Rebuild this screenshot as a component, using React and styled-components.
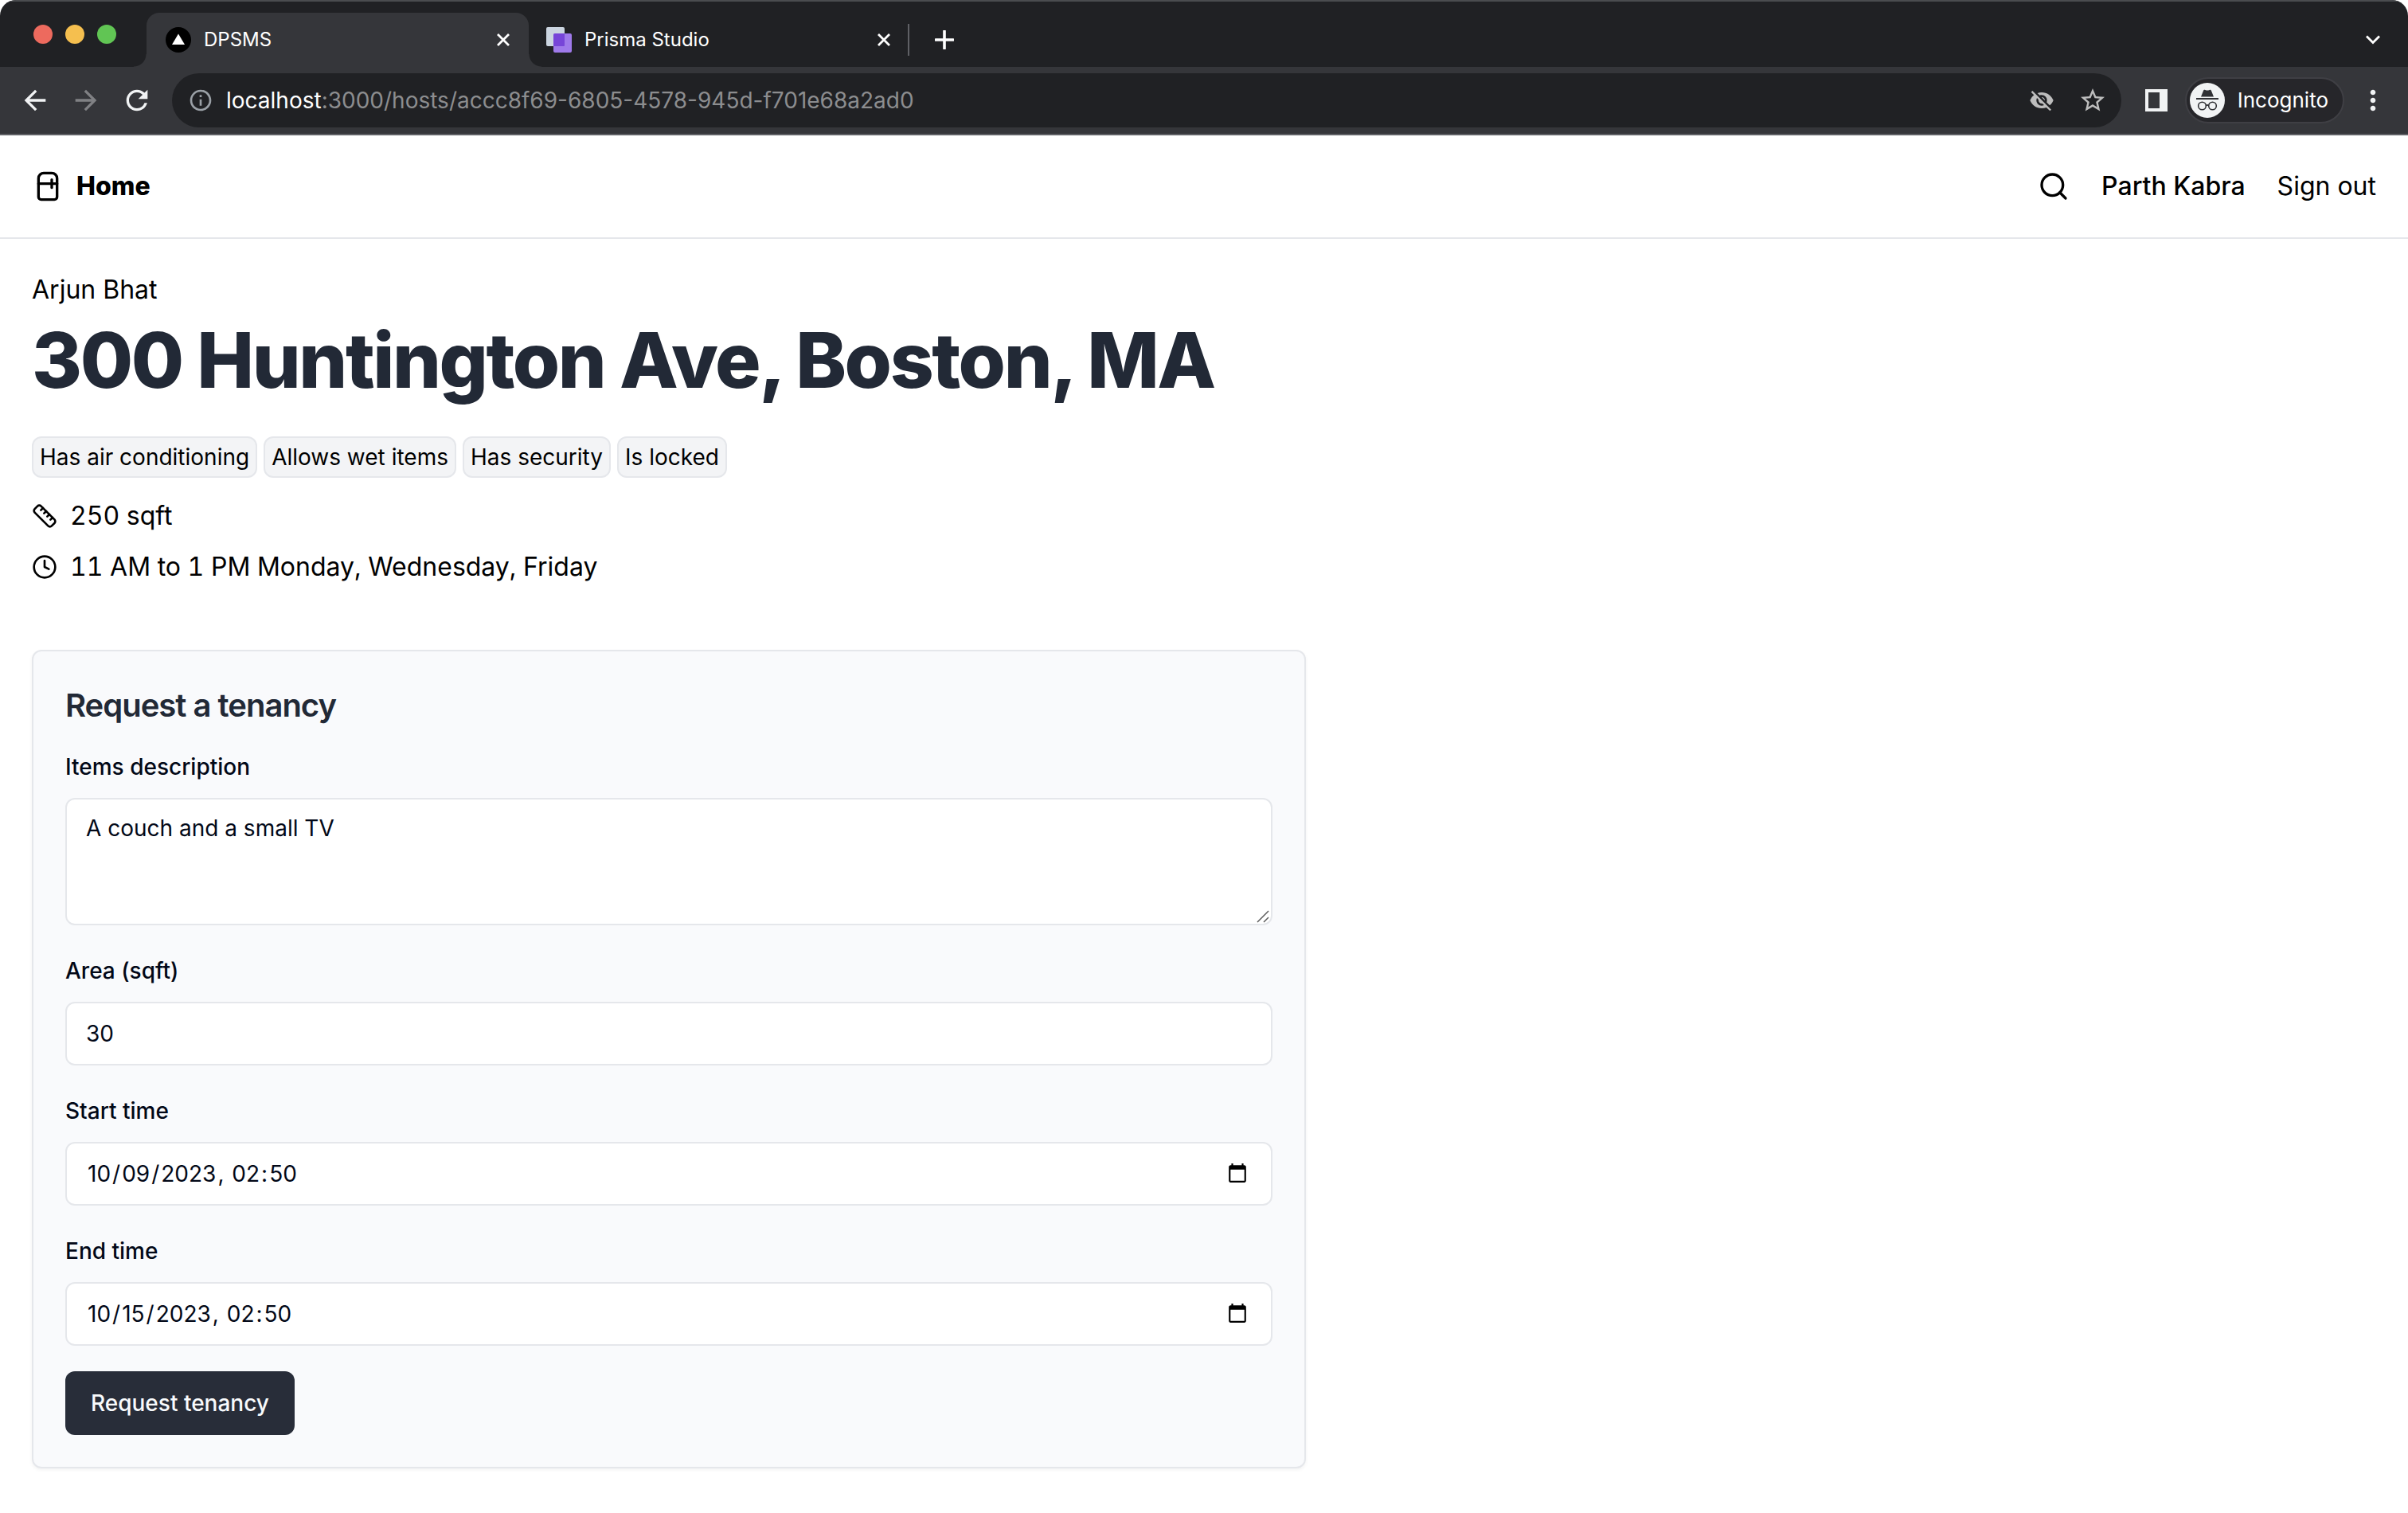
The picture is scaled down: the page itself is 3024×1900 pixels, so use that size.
import React, { useState } from "react";
import styled, { createGlobalStyle } from "styled-components";
import { Clock, Refrigerator, Ruler, Search } from "lucide-react";
import {
  MdArrowBack,
  MdArrowForward,
  MdInfoOutline,
  MdMoreVert,
  MdRefresh,
  MdStarBorder,
  MdVisibilityOff,
} from "react-icons/md";

const GlobalStyle = createGlobalStyle`
  *, *::before, *::after { box-sizing: border-box; }
  body {
    margin: 0;
    background: #ffffff;
    color: #000000;
    font-family: Inter, "Liberation Sans", sans-serif;
    font-size: 32px;
    line-height: 48px;
  }
  button, input, textarea { font: inherit; color: inherit; }
  h1, h2, p, ul { margin: 0; padding: 0; }
  h1, h2 { color: #222936; letter-spacing: -0.025em; }
  svg { display: block; flex: none; }
`;

/* ---------- Browser window ---------- */

const BrowserChrome = styled.div`
  border-radius: 20px 20px 0 0;
  overflow: hidden;
  background: #202124;
  border-bottom: 2px solid #5f6065;
  color: #ffffff;
`;

const TabStrip = styled.div`
  display: flex;
  align-items: stretch;
  height: 84px;
  padding: 14px 24px 0 42px;
  border-top: 2px solid #4a4c4f;
`;

const TrafficLights = styled.div`
  display: flex;
  gap: 16px;
  padding: 15px 38px 0 0;
`;

const Light = styled.button`
  width: 24px;
  height: 24px;
  padding: 0;
  border: 0;
  border-radius: 50%;
  background: ${(p) => p.$color};
`;

const Tab = styled.div`
  position: relative;
  display: flex;
  align-items: center;
  width: 480px;
  padding: 0 24px;
  gap: 16px;
  border-radius: 16px 16px 0 0;
  background: ${(p) => (p.$active ? "#35363a" : "transparent")};

  & + & {
    margin-left: -2px;
  }
  &::before,
  &::after {
    content: "";
    display: ${(p) => (p.$active ? "block" : "none")};
    position: absolute;
    bottom: 0;
    width: 16px;
    height: 16px;
  }
  &::before {
    right: 100%;
    background: radial-gradient(circle at 0 0, transparent 15px, #35363a 16px);
  }
  &::after {
    left: 100%;
    background: radial-gradient(circle at 100% 0, transparent 15px, #35363a 16px);
  }
`;

const TabTitle = styled.span`
  flex: 1;
  font-size: 24px;
  line-height: 32px;
`;

const IconButton = styled.button`
  display: flex;
  align-items: center;
  justify-content: center;
  align-self: center;
  width: ${(p) => p.$size || 40}px;
  height: ${(p) => p.$size || 40}px;
  padding: 0;
  border: 0;
  background: none;
  color: ${(p) => p.$color || "#f1f3f4"};
`;

const TabDivider = styled.div`
  align-self: center;
  width: 2px;
  height: 40px;
  margin: 0 24px 0 -2px;
  background: #5f6065;
`;

const StripSpacer = styled.div`
  flex: 1;
`;

const Toolbar = styled.div`
  display: flex;
  align-items: center;
  gap: 24px;
  height: 84px;
  padding: 0 24px;
  background: #35363a;
`;

const AddressBar = styled.div`
  flex: 1;
  display: flex;
  align-items: center;
  gap: 16px;
  height: 68px;
  padding: 0 16px 0 20px;
  border-radius: 34px;
  background: #202124;
`;

const Address = styled.div`
  flex: 1;
  font-size: 28px;
  line-height: 40px;
  color: #8c8d8f;
`;

const AddressHost = styled.span`
  color: #ffffff;
`;

const AddressActions = styled.div`
  display: flex;
  gap: 24px;
`;

const ToolbarEnd = styled.div`
  display: flex;
  align-items: center;
  gap: 16px;
`;

const Profile = styled.button`
  display: flex;
  align-items: center;
  gap: 16px;
  height: 58px;
  padding: 0 18px 0 4px;
  border: 2px solid #3f3f44;
  border-radius: 29px;
  background: #26262a;
  color: #ffffff;
  font-size: 26px;
  line-height: 32px;
`;

/* ---------- Site header ---------- */

const SiteHeader = styled.header`
  display: flex;
  align-items: center;
  justify-content: space-between;
  height: 130px;
  padding: 0 40px;
  border-bottom: 2px solid #e5e7eb;
`;

const SiteNav = styled.nav`
  display: flex;
  align-items: center;
  gap: 40px;
`;

const NavLink = styled.a`
  display: flex;
  align-items: center;
  gap: 16px;
  color: inherit;
  font-weight: ${(p) => p.$weight || 400};
  text-decoration: none;
`;

/* ---------- Listing ---------- */

const Main = styled.main`
  padding: 40px;
`;

const Title = styled.h1`
  margin-top: 16px;
  font-size: 96px;
  font-weight: 800;
  line-height: 96px;
`;

const Badges = styled.ul`
  display: flex;
  flex-wrap: wrap;
  gap: 8px;
  margin: 48px 0 24px;
  list-style: none;
`;

const Badge = styled.li`
  padding: 4px 8px;
  border: 2px solid #e5e7eb;
  border-radius: 12px;
  background: #f3f4f6;
  font-size: 28px;
  line-height: 40px;
`;

const Facts = styled.div`
  display: grid;
  gap: 16px;
  font-variant-numeric: tabular-nums;
`;

const Fact = styled.p`
  display: flex;
  align-items: center;
  gap: 16px;
`;

/* ---------- Tenancy form ---------- */

const Card = styled.form`
  display: flex;
  flex-direction: column;
  align-items: stretch;
  gap: 32px;
  width: 100%;
  max-width: 1600px;
  margin-top: 80px;
  padding: 40px;
  border: 2px solid #e5e7eb;
  border-radius: 12px;
  background: #f9fafc;
  box-shadow: 0 2px 4px rgba(0, 0, 0, 0.05);
  color: #020817;
`;

const CardTitle = styled.h2`
  margin-bottom: -8px;
  font-size: 40px;
  font-weight: 600;
  line-height: 56px;
`;

const Field = styled.div`
  display: grid;
  gap: 16px;
`;

const LabelLine = styled.div`
  height: 48px;
`;

const Label = styled.label`
  font-size: 28px;
  font-weight: 500;
  line-height: 28px;
`;

const Input = styled.input`
  width: 100%;
  height: 80px;
  padding: 16px 24px;
  border: 2px solid #e5e7eb;
  border-radius: 12px;
  outline: none;
  background: #ffffff;
  font-size: 28px;
  line-height: 40px;
  appearance: none;

  &::-webkit-inner-spin-button {
    display: none;
  }
  &::-webkit-datetime-edit-ampm-field {
    display: none;
  }
  &::-webkit-datetime-edit-month-field,
  &::-webkit-datetime-edit-day-field,
  &::-webkit-datetime-edit-year-field,
  &::-webkit-datetime-edit-hour-field,
  &::-webkit-datetime-edit-minute-field {
    padding: 0 2px;
  }
  &::-webkit-calendar-picker-indicator {
    margin-right: 2px;
  }
`;

const AreaWrap = styled.div`
  position: relative;
  display: grid;
`;

const TextArea = styled(Input)`
  height: 160px;
  resize: none;
`;

const ResizeGrip = styled.svg`
  position: absolute;
  right: 4px;
  bottom: 3px;
`;

const SubmitButton = styled.button`
  align-self: flex-start;
  height: 80px;
  padding: 0 32px;
  border: 0;
  border-radius: 12px;
  background: #282d39;
  color: #f8fafc;
  font-size: 28px;
  font-weight: 500;
  line-height: 40px;
`;

/* ---------- Drawings ---------- */

const VercelMark = () => (
  <svg width="32" height="32" viewBox="0 0 32 32" aria-hidden="true">
    <circle cx="16" cy="16" r="16" fill="#000" />
    <path d="M16 8.5l8 13.5H8z" fill="#fff" />
  </svg>
);

const PrismaMark = () => (
  <svg width="32" height="32" viewBox="0 0 32 32" aria-hidden="true">
    <rect width="23" height="24" rx="2" fill="#cbd5e0" />
    <rect x="9" y="8" width="23" height="24" rx="2" fill="#9f7aea" />
    <path d="M11 8h12v15a1 1 0 0 1-1 1H9V10a2 2 0 0 1 2-2z" fill="#7745d8" />
  </svg>
);

const CloseGlyph = () => (
  <svg width="16" height="16" viewBox="0 0 16 16" aria-hidden="true">
    <path d="M1 1l14 14M15 1L1 15" stroke="#fff" strokeWidth="2.8" />
  </svg>
);

const PlusGlyph = () => (
  <svg width="24" height="24" viewBox="0 0 24 24" aria-hidden="true">
    <path d="M12 1v22M1 12h22" stroke="#fff" strokeWidth="3.6" strokeLinecap="round" />
  </svg>
);

const ChevronGlyph = () => (
  <svg width="18" height="12" viewBox="0 0 18 12" aria-hidden="true">
    <path d="M1 1.5l8 8 8-8" fill="none" stroke="#fff" strokeWidth="2.8" />
  </svg>
);

const SidePanelGlyph = () => (
  <svg width="28" height="28" viewBox="0 0 28 28" aria-hidden="true">
    <path fillRule="evenodd" d="M0 0h28v28H0zM4 4v20h14V4z" fill="#f1f3f4" />
  </svg>
);

const IncognitoGlyph = () => (
  <svg width="44" height="44" viewBox="0 0 44 44" aria-hidden="true">
    <circle cx="22" cy="22" r="22" fill="#f1f3f4" />
    <path
      d="M14 17.5l3-7.500c.4-1.200 1.300-1.500 2.300-1.100l1.500.5c.8.2 1.600.2 2.400 0l1.500-.5c1-.4 1.900-.1 2.300 1.100l3 7.500z"
      fill="#303135"
    />
    <path d="M8 20h28" stroke="#303135" strokeWidth="2" />
    <g fill="none" stroke="#303135" strokeWidth="1.6">
      <circle cx="15.5" cy="29" r="4.8" />
      <circle cx="28.5" cy="29" r="4.8" />
      <path d="M20.3 28.6q1.7-1.4 3.4 0" />
    </g>
  </svg>
);

const badges = ["Has air conditioning", "Allows wet items", "Has security", "Is locked"];

const tabs = [
  { title: "DPSMS", mark: <VercelMark />, active: true },
  { title: "Prisma Studio", mark: <PrismaMark />, active: false },
];

function FormField({ id, label, children }) {
  return (
    <Field>
      <LabelLine>
        <Label htmlFor={id}>{label}</Label>
      </LabelLine>
      {children}
    </Field>
  );
}

function TenancyForm() {
  const [values, setValues] = useState({
    description: "A couch and a small TV",
    area: "30",
    start: "2023-10-09T02:50",
    end: "2023-10-15T02:50",
  });
  const bind = (name) => ({
    id: name,
    name,
    value: values[name],
    onChange: (e) => setValues({ ...values, [name]: e.target.value }),
  });

  return (
    <Card onSubmit={(e) => e.preventDefault()}>
      <CardTitle>Request a tenancy</CardTitle>
      <FormField id="description" label="Items description">
        <AreaWrap>
          <TextArea as="textarea" {...bind("description")} />
          <ResizeGrip width="16" height="16" viewBox="0 0 16 16" aria-hidden="true">
            <path d="M1 15L15 1M9 15l6-6" stroke="#5c5c5c" strokeWidth="1.5" />
          </ResizeGrip>
        </AreaWrap>
      </FormField>
      <FormField id="area" label="Area (sqft)">
        <Input type="number" {...bind("area")} />
      </FormField>
      <FormField id="start" label="Start time">
        <Input type="datetime-local" {...bind("start")} />
      </FormField>
      <FormField id="end" label="End time">
        <Input type="datetime-local" {...bind("end")} />
      </FormField>
      <SubmitButton type="submit">Request tenancy</SubmitButton>
    </Card>
  );
}

export default function App() {
  return (
    <>
      <GlobalStyle />
      <BrowserChrome>
        <TabStrip>
          <TrafficLights>
            <Light $color="#ed6a5e" aria-label="Close window" />
            <Light $color="#f5bf4f" aria-label="Minimise window" />
            <Light $color="#61c554" aria-label="Zoom window" />
          </TrafficLights>
          {tabs.map((tab) => (
            <Tab key={tab.title} $active={tab.active}>
              {tab.mark}
              <TabTitle>{tab.title}</TabTitle>
              <IconButton $size={16} aria-label={`Close ${tab.title}`}>
                <CloseGlyph />
              </IconButton>
            </Tab>
          ))}
          <TabDivider />
          <IconButton aria-label="New tab">
            <PlusGlyph />
          </IconButton>
          <StripSpacer />
          <IconButton aria-label="Search tabs">
            <ChevronGlyph />
          </IconButton>
        </TabStrip>
        <Toolbar>
          <IconButton aria-label="Back">
            <MdArrowBack size={40} />
          </IconButton>
          <IconButton aria-label="Forward" $color="#808184">
            <MdArrowForward size={40} />
          </IconButton>
          <IconButton aria-label="Reload">
            <MdRefresh size={40} />
          </IconButton>
          <AddressBar>
            <IconButton $size={32} $color="#9aa0a6" aria-label="Site information">
              <MdInfoOutline size={32} />
            </IconButton>
            <Address>
              <AddressHost>localhost</AddressHost>
              :3000/hosts/accc8f69-6805-4578-945d-f701e68a2ad0
            </Address>
            <AddressActions>
              <IconButton $color="#bdbdbd" aria-label="Third-party cookies blocked">
                <MdVisibilityOff size={32} />
              </IconButton>
              <IconButton $color="#bdbdbd" aria-label="Bookmark this tab">
                <MdStarBorder size={36} />
              </IconButton>
            </AddressActions>
          </AddressBar>
          <ToolbarEnd>
            <IconButton aria-label="Side panel">
              <SidePanelGlyph />
            </IconButton>
            <Profile>
              <IncognitoGlyph />
              Incognito
            </Profile>
            <IconButton aria-label="Browser menu">
              <MdMoreVert size={40} />
            </IconButton>
          </ToolbarEnd>
        </Toolbar>
      </BrowserChrome>

      <SiteHeader>
        <NavLink href="#home" $weight={800}>
          <Refrigerator size={40} />
          Home
        </NavLink>
        <SiteNav>
          <NavLink href="#search" aria-label="Search">
            <Search size={40} />
          </NavLink>
          <NavLink href="#profile" $weight={500}>
            Parth Kabra
          </NavLink>
          <NavLink href="#sign-out">Sign out</NavLink>
        </SiteNav>
      </SiteHeader>

      <Main>
        <p>Arjun Bhat</p>
        <Title>300 Huntington Ave, Boston, MA</Title>
        <Badges>
          {badges.map((text) => (
            <Badge key={text}>{text}</Badge>
          ))}
        </Badges>
        <Facts>
          <Fact>
            <Ruler size={32} />
            250 sqft
          </Fact>
          <Fact>
            <Clock size={32} />
            11 AM to 1 PM Monday, Wednesday, Friday
          </Fact>
        </Facts>
        <TenancyForm />
      </Main>
    </>
  );
}
